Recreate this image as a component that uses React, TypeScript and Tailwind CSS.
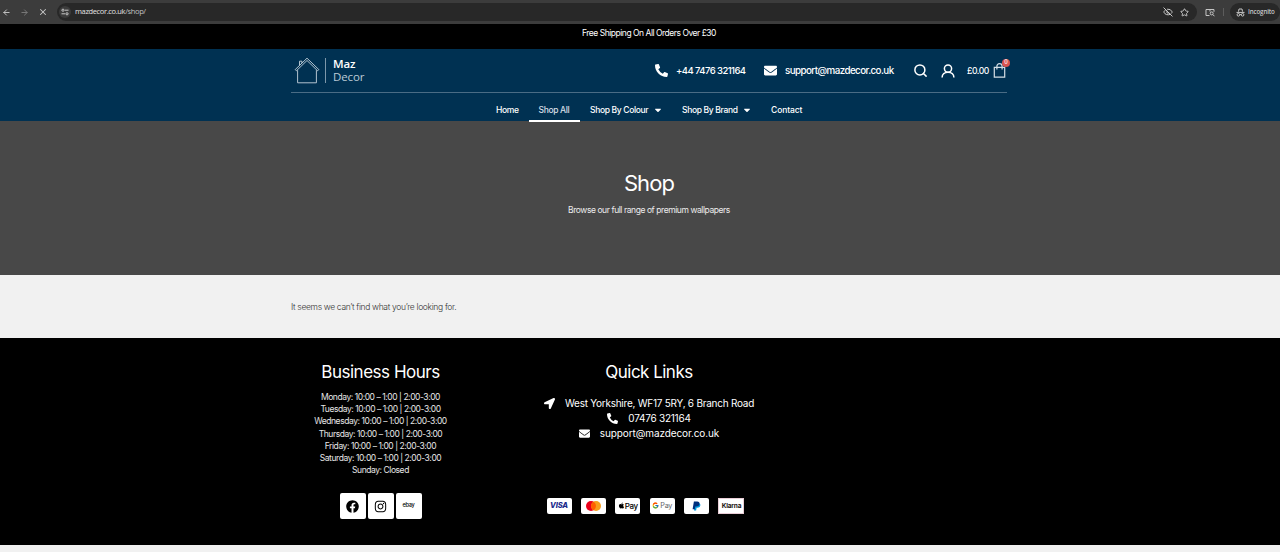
import type { ReactNode } from 'react';
import { ArrowLeft, ArrowRight, EyeOff, Search, Star, X } from 'lucide-react';
import { FaApple, FaCaretDown, FaEnvelope, FaFacebook, FaInstagram, FaLocationArrow, FaPhoneAlt } from 'react-icons/fa';
import { FcGoogle } from 'react-icons/fc';

const hours = [
  'Monday: 10:00 – 1:00 | 2:00-3:00',
  'Tuesday: 10:00 – 1:00 | 2:00-3:00',
  'Wednesday: 10:00 – 1:00 | 2:00-3:00',
  'Thursday: 10:00 – 1:00 | 2:00-3:00',
  'Friday: 10:00 – 1:00 | 2:00-3:00',
  'Saturday: 10:00 – 1:00 | 2:00-3:00',
  'Sunday: Closed',
];

const BrowserBar = () => (
  <div className="flex h-6 items-center bg-[#3c3c3c] text-[#c7c7c7]">
    <ArrowLeft className="ml-[2px]" size={9} strokeWidth={2.5} />
    <ArrowRight className="ml-[9px] text-[#7c7c7c]" size={9} strokeWidth={2.5} />
    <X className="ml-[9px]" size={10} strokeWidth={2.5} />
    <div className="ml-[9px] flex h-[18px] w-[1141px] items-center rounded-full bg-[#282828]">
      <span className="ml-[2px] flex size-3 items-center justify-center rounded-full bg-[#3c3c3c]">
        <svg width="8" height="8" viewBox="0 0 8 8" fill="none" stroke="currentColor">
          <circle cx="2" cy="2.2" r="1.1" />
          <path d="M4 2.2h3.5M.5 5.8H4" />
          <circle cx="6" cy="5.8" r="1.1" />
        </svg>
      </span>
      <span className="ml-[4px] font-['Open_Sans',sans-serif] text-[7.5px] leading-none tracking-[-0.36px] text-[#e3e3e3]">
        mazdecor.co.uk<span className="text-[#c0c0c0]">/shop/</span>
      </span>
      <EyeOff className="ml-auto" size={10} strokeWidth={2.4} />
      <Star className="ml-[7px] mr-[8px]" size={9} strokeWidth={2.6} />
    </div>
    <svg className="ml-[8px]" width="10" height="9" viewBox="0 0 10 9" fill="none" stroke="currentColor">
      <path d="M4.5 7.5H1v-6h8v2.3M5 1.5v2" />
      <circle cx="6.7" cy="5.4" r="1.5" />
      <path d="M7.8 6.5l1.7 1.8" />
    </svg>
    <div className="ml-[8px] h-2 w-px bg-[#5c5c5c]" />
    <div className="ml-[6px] flex h-[18px] w-[50px] items-center rounded-full bg-[#282828] pl-[6px]">
      <svg width="9" height="9" viewBox="0 0 9 9" fill="none" stroke="currentColor">
        <path d="M2.5 3.6l.5-2.6h3l.5 2.6" />
        <path d="M.5 4.4h8M3.8 6.6h1.4" />
        <circle cx="2.4" cy="6.8" r="1.3" />
        <circle cx="6.6" cy="6.8" r="1.3" />
      </svg>
      <span className="ml-[3px] font-['Open_Sans',sans-serif] text-[6.2px] font-semibold leading-none tracking-[-0.15px]">Incognito</span>
    </div>
  </div>
);

const Logo = () => (
  <div className="flex items-center">
    <svg width="26" height="27" viewBox="0 0 26 27" fill="none" stroke="#c5d2dc" strokeWidth="0.9">
      <path d="M1.2 12.6L13 1.2l11.8 11.4-1.2 1.2L13 3.5 2.4 13.8z" />
      <path d="M3.6 13.2v12.6h18.8V13.2M5.5 8.3V4.2h2.4v1.9" />
    </svg>
    <div className="ml-[5px] h-[25px] w-px bg-[#7d97aa]" />
    <div className="ml-[7px] w-[33px] font-['Open_Sans',sans-serif] text-[11.5px] leading-[12.5px] tracking-[-0.1px]">
      <div className="h-[12.5px] font-semibold">Maz</div>
      <div className="h-[12.5px] text-[#bccbd6]">Decor</div>
    </div>
  </div>
);

const Header = () => (
  <header className="relative h-[72px] bg-[#003152] font-medium">
    <div className="ml-[291px] w-[716px]">
      <div className="flex h-[44px] items-center whitespace-nowrap border-b border-[#4a6c85] pl-[3px]">
        <Logo />
        <div className="ml-[289px] flex w-[109px] items-center">
          <FaPhoneAlt size={13} />
          <span className="ml-[8px] pt-px text-[9.5px] tracking-[-0.58px]">+44 7476 321164</span>
        </div>
        <FaEnvelope size={13} />
        <span className="ml-[8px] w-[128px] pt-px text-[9.8px] tracking-[-0.57px]">support@mazdecor.co.uk</span>
        <Search size={15} strokeWidth={2.4} />
        <svg className="ml-[13px]" width="14" height="14" viewBox="0 0 14 14" fill="none" stroke="currentColor" strokeWidth="1.5">
          <circle cx="7" cy="4.6" r="3.6" />
          <path d="M1.1 13.5c0-3.2 2.4-5.3 5.9-5.3s5.9 2.1 5.9 5.3" />
        </svg>
        <span className="ml-[12px] w-[26px] pt-px text-[8.6px] tracking-[-0.45px]">£0.00</span>
        <div className="relative">
          <svg className="block" width="13" height="15" viewBox="0 0 13 15" fill="none" stroke="#d3dde4" strokeWidth="1.2">
            <path d="M1.3 4.3h10.4v9.9H1.3z" />
            <path d="M3.9 6.5V3.2a2.6 2.6 0 015.2 0v3.3" />
          </svg>
          <span className="absolute -top-[4px] left-[9px] flex size-[8px] items-center justify-center rounded-full bg-[#d9534f] text-[5.5px] leading-none">0</span>
        </div>
      </div>
      <nav className="ml-[205px] flex h-[29px] items-stretch whitespace-nowrap pt-[5px] text-[8.5px] leading-[24px] tracking-[-0.34px]">
        <a className="w-[32.5px] tracking-[-0.35px]">Home</a>
        <a className="w-[51px] border-b-2 border-white pl-[10px] text-[#d5dee5]">Shop All</a>
        <a className="ml-[10.5px] flex w-[92px] items-center">
          <span className="w-[63px]">Shop By Colour</span>
          <FaCaretDown size={10} />
        </a>
        <a className="flex w-[89px] items-center">
          <span className="w-[59.5px]">Shop By Brand</span>
          <FaCaretDown size={10} />
        </a>
        <a className="tracking-[-0.1px]">Contact</a>
      </nav>
    </div>
  </header>
);

const PayCard = ({ children }: { children: ReactNode }) => (
  <div className="flex h-[16px] w-[25px] items-center justify-center rounded-[2px] bg-white text-black">{children}</div>
);

const SocialLink = ({ children }: { children: ReactNode }) => (
  <a className="flex size-[26px] items-center justify-center rounded-[2px] bg-white text-black">{children}</a>
);

const Footer = () => (
  <footer className="h-[207px] bg-black">
    <div className="ml-[291px] flex w-[716px] whitespace-nowrap pt-[22px]">
      <div className="flex w-[179px] flex-col items-center">
        <h2 className="text-[17px] leading-[25px] tracking-[-0.48px]">Business Hours</h2>
        <div className="mt-[6px] flex flex-col items-center text-[8.5px] leading-[12.2px] tracking-[-0.44px] text-[#e6e6e6]">
          {hours.map((line) => (
            <div key={line}>{line}</div>
          ))}
        </div>
        <div className="mt-[16.6px] flex gap-[2px]">
          <SocialLink><FaFacebook size={13} /></SocialLink>
          <SocialLink><FaInstagram size={13} /></SocialLink>
          <SocialLink><span className="text-[5.6px] font-medium leading-none tracking-[-0.25px]">ebay</span></SocialLink>
        </div>
      </div>
      <div className="flex w-[358px] flex-col items-center">
        <h2 className="text-[17px] leading-[25px] tracking-[-0.52px]">Quick Links</h2>
        <ul className="mt-[10.6px] flex flex-col items-center text-[10px] leading-[15.3px] tracking-[-0.25px]">
          <li className="flex items-center gap-[10px]"><FaLocationArrow size={11} />West Yorkshire, WF17 5RY, 6 Branch Road</li>
          <li className="flex items-center gap-[10px]"><FaPhoneAlt size={11} />07476 321164</li>
          <li className="flex items-center gap-[10px] tracking-[-0.1px]"><FaEnvelope size={11} />support@mazdecor.co.uk</li>
        </ul>
        <div className="ml-[-7px] mt-[56.4px] flex items-center gap-[9.4px]">
          <PayCard><span className="text-[7.5px] font-extrabold italic leading-none tracking-[-0.1px] text-[#1a2a8c]">VISA</span></PayCard>
          <PayCard>
            <svg width="15" height="10" viewBox="0 0 15 10">
              <circle cx="5" cy="5" r="5" fill="#eb001b" />
              <circle cx="10" cy="5" r="5" fill="#f79e1b" />
              <path d="M7.5.7a5 5 0 010 8.6 5 5 0 010-8.6z" fill="#ff5f00" />
            </svg>
          </PayCard>
          <PayCard><FaApple size={7} /><span className="text-[8px] font-medium leading-none tracking-[-0.4px]">Pay</span></PayCard>
          <PayCard><FcGoogle size={7} /><span className="ml-px text-[7.2px] leading-none tracking-[-0.3px] text-[#5f6368]">Pay</span></PayCard>
          <PayCard>
            <svg width="9" height="10" viewBox="0 0 9 10">
              <path d="M3 2.3h3.4c1.6.2 2.2 1.1 1.9 2.3-.3 1.5-1.4 2.2-3 2.2h-.7L4.1 9.6H2z" fill="#009cde" />
              <path d="M1.9.4h3.3c1.7 0 2.6.9 2.3 2.5-.4 1.8-1.6 2.5-3.3 2.5h-.9l-.5 2.8H.6z" fill="#00307f" />
            </svg>
          </PayCard>
          <div className="flex h-[16px] w-[26px] items-center justify-center border border-[#e8cdd6] bg-white text-[#17120f]">
            <span className="text-[6.5px] font-bold leading-none tracking-[-0.2px]">Klarna</span>
          </div>
        </div>
      </div>
    </div>
  </footer>
);

export default function App() {
  return (
    <div className="h-[552px] w-[1280px] overflow-hidden bg-[#f1f1f1] font-['Inter',sans-serif] text-white">
      <BrowserBar />
      <div className="h-[25px] bg-black pl-[18px] text-center text-[8.5px] leading-[19px] tracking-[-0.48px]">
        Free Shipping On All Orders Over £30
      </div>
      <Header />
      <section className="flex h-[154px] flex-col items-center bg-[#484848] pl-[18px] pt-[48px]">
        <h1 className="text-[22px] leading-[28px] tracking-[-0.9px]">Shop</h1>
        <p className="mt-[6.6px] text-[8.5px] leading-[12px] tracking-[-0.43px] text-[#ececec]">Browse our full range of premium wallpapers</p>
      </section>
      <main className="ml-[291px] h-[63px] pt-[26px] text-[8.5px] font-light leading-[12px] tracking-[-0.33px] text-[#333]">
        It seems we can’t find what you’re looking for.
      </main>
      <Footer />
    </div>
  );
}
